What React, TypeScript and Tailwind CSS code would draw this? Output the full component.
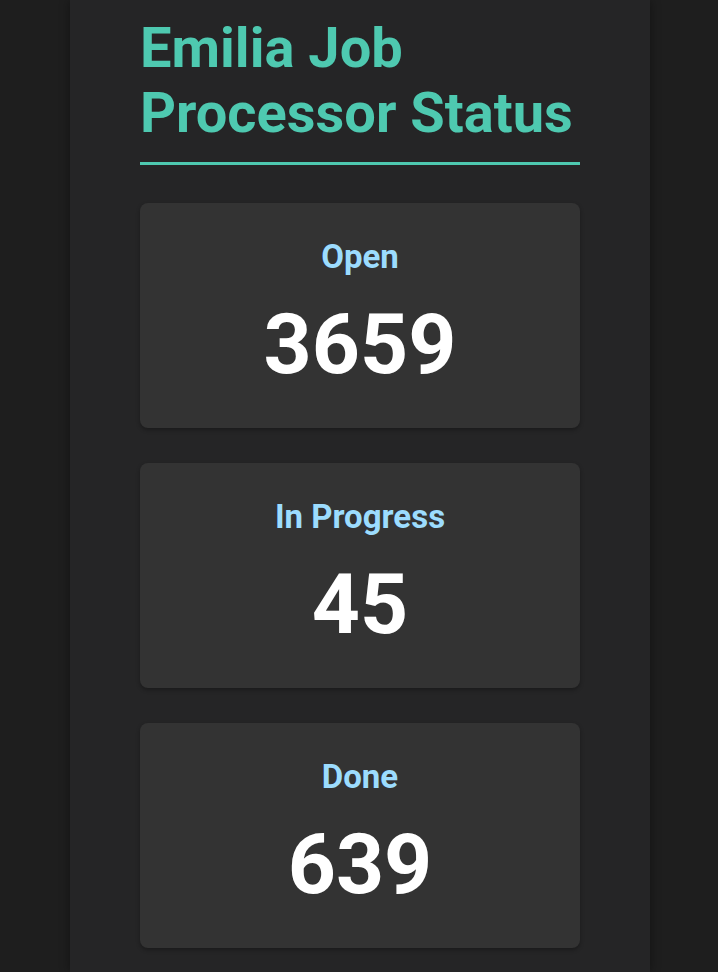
export default function App() {
  const stats = [
    { label: 'Open', value: 3659 },
    { label: 'In Progress', value: 45 },
    { label: 'Done', value: 639 },
  ];

  return (
    <div
      className="min-h-screen bg-[#1e1e1e] flex justify-center pl-[2px]"
      style={{ fontFamily: 'Roboto, "Liberation Sans", sans-serif' }}
    >
      <div className="w-[580px] min-h-[972px] bg-[#252526] px-[70px] pt-[16px] shadow-[0_0_10px_rgba(0,0,0,0.4)]">
        <h1 className="text-[#4ec9b0] text-[56px] leading-[65px] font-bold pb-[16px] border-b-[3px] border-[#4ec9b0]">
          Emilia Job Processor Status
        </h1>

        <div className="mt-[38px] flex flex-col gap-[35px]">
          {stats.map((s) => (
            <div
              key={s.label}
              className="h-[225px] bg-[#333333] rounded-lg shadow-[0_2px_4px_rgba(0,0,0,0.3)] flex flex-col items-center pt-[34px]"
            >
              <div className="text-[#9cdcfe] text-[33px] font-bold leading-[40px]">{s.label}</div>
              <div className="text-white text-[84px] font-bold leading-[100px] mt-[18px]">{s.value}</div>
            </div>
          ))}
        </div>
      </div>
    </div>
  );
}
